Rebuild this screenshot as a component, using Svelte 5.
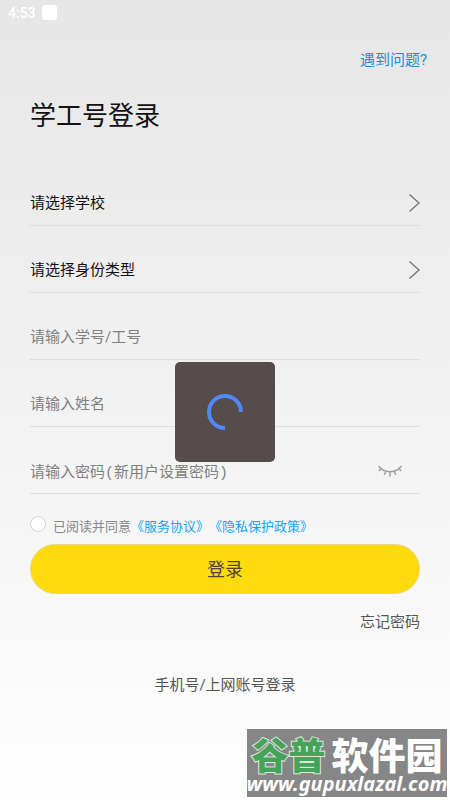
<script lang="ts">
	const schools = ['北京大学', '清华大学', '复旦大学'];
	const roles = ['学生', '教师', '职工'];

	let school = '';
	let role = '';
	let account = '';
	let name = '';
	let password = '';
	let agreed = false;
	let loading = true;
</script>

<div class="page">
	<header class="status">
		<span>4:53</span>
		<i class="notice"></i>
	</header>

	<main>
		<a class="help" href="#help">遇到问题?</a>
		<h1>学工号登录</h1>

		<form on:submit|preventDefault={() => (loading = true)}>
			<div class="row">
				<select bind:value={school} aria-label="请选择学校">
					<option value="">请选择学校</option>
					{#each schools as item}
						<option value={item}>{item}</option>
					{/each}
				</select>
				<svg class="arrow" viewBox="0 0 12 20" aria-hidden="true">
					<path d="M1.5 1.5 11 10 1.5 18.5" />
				</svg>
			</div>
			<div class="row">
				<select bind:value={role} aria-label="请选择身份类型">
					<option value="">请选择身份类型</option>
					{#each roles as item}
						<option value={item}>{item}</option>
					{/each}
				</select>
				<svg class="arrow" viewBox="0 0 12 20" aria-hidden="true">
					<path d="M1.5 1.5 11 10 1.5 18.5" />
				</svg>
			</div>
			<div class="row">
				<input type="text" bind:value={account} placeholder="请输入学号/工号" aria-label="请输入学号/工号" />
			</div>
			<div class="row">
				<input type="text" bind:value={name} placeholder="请输入姓名" aria-label="请输入姓名" />
			</div>
			<div class="row password">
				<input
					type="password"
					bind:value={password}
					placeholder="请输入密码(新用户设置密码)"
					aria-label="请输入密码"
				/>
				<button type="button" class="eye" aria-label="显示密码">
					<svg viewBox="0 0 26 14" aria-hidden="true">
						<path d="M1.500 2C7 9.500 19 9.500 24.500 2" />
						<path d="M4.500 4.500 1.800 7M9 7 7.200 11M13 7.600V12.500M17 7 18.800 11M21.500 4.500 24.200 7" />
					</svg>
				</button>
			</div>

			<div class="consent">
				<input id="agree" type="checkbox" bind:checked={agreed} />
				<label for="agree">已阅读并同意</label><a href="#service">《服务协议》</a><a href="#privacy">《隐私保护政策》</a>
			</div>

			<button class="submit" type="submit">登录</button>
		</form>

		<a class="forgot" href="#forgot">忘记密码</a>
		<a class="other" href="#phone">手机号/上网账号登录</a>
	</main>

	<!-- Loading indicator -->
	{#if loading}
		<div class="overlay">
			<div class="loader" role="status" aria-label="加载中">
				<svg viewBox="0 0 36 36" aria-hidden="true">
					<path d="M34 18A16 16 0 1 0 18 34" />
				</svg>
			</div>
		</div>
	{/if}

	<div class="brand">
		<div class="brand-name"><b>谷普</b><strong>软件园</strong></div>
		<div class="brand-url">www.gupuxlazal.com</div>
	</div>
</div>

<style>
	:global(body) {
		margin: 0;
	}

	.page {
		position: relative;
		display: flex;
		flex-direction: column;
		min-height: 100vh;
		background: linear-gradient(#e6e6e6, #fefefe);
		color: #111;
		font-family: Roboto, 'Noto Sans CJK SC', sans-serif;
		font-size: 15px;
		line-height: 20px;
		text-spacing-trim: space-all;
	}

	.page * {
		box-sizing: border-box;
	}

	a {
		text-decoration: none;
	}

	.status {
		display: flex;
		align-items: center;
		gap: 6px;
		height: 24px;
		padding: 2px 8px 0;
		color: #fff;
		font-size: 14px;
		font-weight: 500;
	}

	.notice {
		width: 15px;
		height: 15px;
		margin-bottom: 2px;
		border-radius: 3px;
		background: #fff;
	}

	main {
		display: flex;
		flex-direction: column;
		padding: 26px 30px 0;
	}

	.help {
		align-self: flex-end;
		margin-right: -7px;
		color: #1a8fd0;
	}

	h1 {
		margin: 28px 0 25px;
		font-size: 26px;
		font-weight: 400;
		line-height: 36px;
	}

	.row {
		position: relative;
		display: flex;
		align-items: center;
		height: 67px;
		padding-top: 22px;
		border-bottom: 1px solid #dedede;
	}

	.password {
		padding-top: 26px;
	}

	.row select,
	.row input {
		flex: 1;
		min-width: 0;
		height: 40px;
		padding: 0;
		border: 0;
		outline: 0;
		appearance: none;
		background: none;
		color: #111;
		font: inherit;
	}

	.row .arrow {
		position: absolute;
		right: 0;
		width: 12px;
		height: 20px;
		pointer-events: none;
	}

	.row input::placeholder {
		color: #808080;
		opacity: 1;
	}

	.row.password input {
		font-family: 'Liberation Mono', 'Noto Sans CJK SC', monospace;
	}

	svg {
		display: block;
		fill: none;
	}

	.arrow path {
		stroke: #777;
		stroke-width: 1.4;
	}

	.eye {
		margin-right: 17px;
		padding: 0 0 4px;
		border: 0;
		background: none;
	}

	.eye svg {
		width: 26px;
		height: 14px;
		stroke: #a0a0a0;
		stroke-width: 1.5;
	}

	.consent {
		display: flex;
		align-items: center;
		height: 50px;
		padding-top: 14px;
		font-family: 'Noto Sans CJK SC', sans-serif;
		font-size: 13px;
		color: #888;
	}

	.consent input {
		appearance: none;
		width: 16px;
		height: 16px;
		margin: 0 7px 4px 0;
		border: 1px solid #d4d4d4;
		border-radius: 50%;
		background: #fff;
	}

	.consent input:checked {
		background: #ffda0c;
	}

	.consent a {
		color: #12a5f4;
	}

	.submit {
		display: block;
		width: 100%;
		height: 50px;
		padding: 2px 0 0;
		border: 1px solid #e8d98a;
		border-radius: 25px;
		background: #ffda0c;
		color: #4c4633;
		font: inherit;
		font-size: 18px;
	}

	.forgot {
		align-self: flex-end;
		margin-top: 18px;
		color: #555;
	}

	.other {
		align-self: center;
		margin-top: 43px;
		color: #555;
	}

	.overlay {
		position: absolute;
		inset: 24px 0 0;
		display: flex;
		align-items: center;
		justify-content: center;
		pointer-events: none;
	}

	.loader {
		display: flex;
		align-items: center;
		justify-content: center;
		width: 100px;
		height: 100px;
		border-radius: 5px;
		background: rgba(81, 70, 69, 0.97);
	}

	.loader svg {
		width: 36px;
		height: 36px;
		stroke: #5088f8;
		stroke-width: 4;
	}

	.brand {
		position: absolute;
		right: 3px;
		bottom: 3px;
		display: flex;
		flex-direction: column;
		align-items: center;
		width: 200px;
		height: 68px;
		padding-top: 7px;
		background: #868686;
		color: #fff;
		white-space: nowrap;
	}

	.brand-name {
		display: flex;
		gap: 6px;
		font-family: 'Noto Sans CJK SC', sans-serif;
		font-size: 37px;
		font-weight: 700;
		line-height: 36px;
	}

	.brand-name b {
		color: #46a35a;
		-webkit-text-stroke: 2px #dfe9df;
		paint-order: stroke fill;
	}

	.brand-url {
		font-family: 'Noto Sans', sans-serif;
		font-size: 20px;
		font-style: italic;
		font-weight: 700;
		line-height: 24px;
	}
</style>
